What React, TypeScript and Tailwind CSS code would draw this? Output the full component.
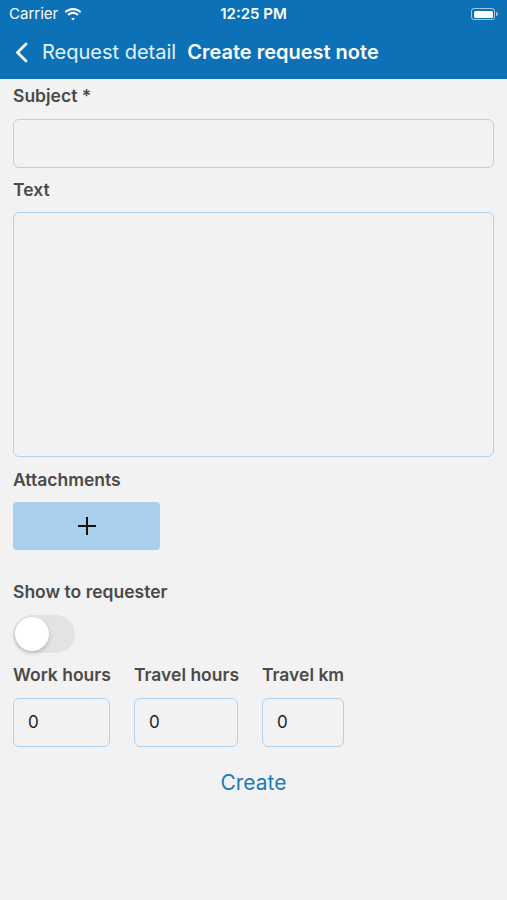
import { useState } from "react";

const font = { fontFamily: "Inter, 'Liberation Sans', sans-serif" };

const Label = ({ children }: { children: React.ReactNode }) => (
  <div className="text-[17.5px] font-semibold leading-[22px] text-[#4a4a4a] whitespace-nowrap">{children}</div>
);

const NumberBox = ({ width }: { width: string }) => (
  <div className={`${width} h-[49px] rounded-[6px] border border-[#acd2ec] flex items-center px-[14px] text-[17px] text-[#222]`}>
    0
  </div>
);

const App = () => {
  const [shown, setShown] = useState(false);

  return (
    <div className="min-h-[900px] bg-[#f2f2f2] flex flex-col" style={font}>
      <header className="bg-[#0c71b6] text-white h-[79px] flex flex-col">
        <div className="h-[28px] flex items-center justify-between px-[9px] text-[15px]">
          <div className="flex items-center gap-[6px] w-[120px]">
            <span>Carrier</span>
            <svg width="18" height="13" viewBox="0 0 18 13" fill="white">
              <path d="M9 2.2c2.7 0 5.1 1 6.9 2.7l1.4-1.5C15.2 1.3 12.2 0 9 0S2.8 1.3.7 3.4l1.4 1.5C3.9 3.2 6.3 2.2 9 2.2z" />
              <path d="M9 6c1.6 0 3.1.6 4.2 1.7l1.4-1.5C13.1 4.7 11.1 3.8 9 3.8S4.9 4.7 3.4 6.2l1.4 1.5C5.9 6.6 7.4 6 9 6z" />
              <path d="M9 9.7c.7 0 1.3.3 1.8.7L9 12.4 7.2 10.4c.5-.4 1.1-.7 1.8-.7z" />
            </svg>
          </div>
          <span className="font-semibold">12:25 PM</span>
          <div className="w-[120px] flex justify-end">
            <div className="flex items-center gap-[1px]">
              <div className="w-[24px] h-[12px] rounded-[3px] border border-white/60 p-[1.5px]">
                <div className="w-full h-full rounded-[1.5px] bg-white" />
              </div>
              <div className="w-[1.5px] h-[4px] rounded-r bg-white/60" />
            </div>
          </div>
        </div>
        <div className="flex-1 flex items-center px-[15px] pb-[3px]">
          <svg width="13" height="21" viewBox="0 0 13 21" fill="none" stroke="white" strokeWidth="2.8" strokeLinecap="round" strokeLinejoin="round">
            <path d="M11 2 2.5 10.5 11 19" />
          </svg>
          <span className="ml-[14px] text-[20px] text-white/90">Request detail</span>
          <span className="ml-[11px] text-[20px] font-semibold">Create request note</span>
        </div>
      </header>

      <main className="px-[13px] pt-[6px] flex flex-col">
        <Label>Subject *</Label>
        <div className="mt-[12px] h-[49px] rounded-[6px] border border-[#acd2ec]" />

        <div className="mt-[11px]">
          <Label>Text</Label>
        </div>
        <div className="mt-[11px] h-[245px] rounded-[6px] border border-[#acd2ec]" />

        <div className="mt-[12px]">
          <Label>Attachments</Label>
        </div>
        <button className="mt-[11px] w-[147px] h-[48px] rounded-[4px] bg-[#a8cfeb] flex items-center justify-center">
          <svg width="20" height="20" viewBox="0 0 20 20" stroke="#111" strokeWidth="2">
            <path d="M10 1v18M1 10h18" />
          </svg>
        </button>

        <div className="mt-[31px]">
          <Label>Show to requester</Label>
        </div>
        <button
          onClick={() => setShown(!shown)}
          className={`mt-[12px] w-[62px] h-[38px] rounded-full p-[2px] flex items-center ${shown ? "bg-[#0c71b6] justify-end" : "bg-[#e3e3e3] justify-start"}`}
        >
          <span className="w-[34px] h-[34px] rounded-full bg-white shadow-[0_2px_4px_rgba(0,0,0,0.2)]" />
        </button>

        <div className="mt-[11px] flex">
          <div className="w-[121px] flex flex-col gap-[12px]">
            <Label>Work hours</Label>
            <NumberBox width="w-[97px]" />
          </div>
          <div className="w-[128px] flex flex-col gap-[12px]">
            <Label>Travel hours</Label>
            <NumberBox width="w-[104px]" />
          </div>
          <div className="flex flex-col gap-[12px]">
            <Label>Travel km</Label>
            <NumberBox width="w-[82px]" />
          </div>
        </div>

        <button className="mt-[20px] self-center text-[21px] text-[#1f7ab8]">Create</button>
      </main>
    </div>
  );
};

export default App;
